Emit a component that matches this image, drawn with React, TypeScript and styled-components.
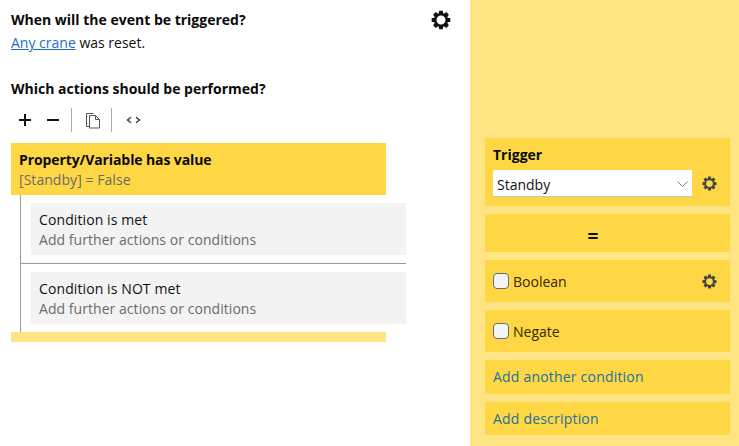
import React from 'react';
import styled, {createGlobalStyle} from 'styled-components';

const GlobalStyle = createGlobalStyle`
  html, body {
    margin: 0;
    padding: 0;
    background: #fff;
  }

  body {
    font-family: "Open Sans", "Noto Sans", "Liberation Sans", sans-serif;
    font-size: 14px;
    color: #111;
  }
`

const Gear = ({size, color}: { size: number, color: string }) => (
    <svg width={size} height={size} viewBox="0 0 24 24">
        <circle cx="12" cy="12" r="6.8" fill="none" stroke={color} strokeWidth="2.8"/>
        {[0, 45, 90, 135, 180, 225, 270, 315].map(angle => (
            <path key={angle} d="M9.8 0.8h4.4l0.8 4.4h-6z" fill={color} transform={`rotate(${angle} 12 12)`}/>
        ))}
    </svg>
);

const CopyIcon = () => (
    <svg width="16" height="17" viewBox="0 0 16 17" fill="none" stroke="#555" strokeWidth="1">
        <path d="M4.5 14.5H1.5V1.5H8.5"/>
        <path d="M4.5 3.5H10.5L14.5 7.5V16H4.5Z" fill="#fff"/>
        <path d="M10.5 3.5V7.5H14.5"/>
    </svg>
);

const PlusIcon = () => (
    <svg width="14" height="14" viewBox="0 0 14 14">
        <path d="M7 1v12M1 7h12" stroke="#111" strokeWidth="2"/>
    </svg>
);

const MinusIcon = () => (
    <svg width="14" height="14" viewBox="0 0 14 14">
        <path d="M1 7h12" stroke="#111" strokeWidth="2"/>
    </svg>
);

const CodeIcon = () => (
    <svg width="15" height="8" viewBox="0 0 15 8" fill="none" stroke="#222" strokeWidth="1.1">
        <path d="M5 1.2L1.4 4L5 6.8M10 1.2L13.6 4L10 6.8"/>
    </svg>
);

const Chevron = () => (
    <svg width="11" height="6" viewBox="0 0 11 6" fill="none" stroke="#666" strokeWidth="0.9">
        <path d="M0.5 0.5L5.5 5.5L10.5 0.5"/>
    </svg>
);

export default function App() {
    return (
        <>
            <GlobalStyle/>
            <Page>
                <Main>
                    <TitleRow>
                        <Heading>When will the event be triggered?</Heading>
                        <GearButton><Gear size={20} color="#111"/></GearButton>
                    </TitleRow>
                    <Sentence><a href="#crane">Any crane</a> was reset.</Sentence>

                    <SecondHeading>Which actions should be performed?</SecondHeading>

                    <Toolbar>
                        <ToolButton><PlusIcon/></ToolButton>
                        <ToolButton><MinusIcon/></ToolButton>
                        <ToolDivider/>
                        <ToolButton><CopyIcon/></ToolButton>
                        <ToolDivider/>
                        <ToolButton><CodeIcon/></ToolButton>
                    </Toolbar>

                    <Block>
                        <BlockTitle>Property/Variable has value</BlockTitle>
                        <Muted>[Standby] = False</Muted>
                    </Block>
                    <Branches>
                        <Branch>
                            <BranchTitle>Condition is met</BranchTitle>
                            <Muted>Add further actions or conditions</Muted>
                        </Branch>
                        <BranchLine/>
                        <Branch>
                            <BranchTitle>Condition is NOT met</BranchTitle>
                            <Muted>Add further actions or conditions</Muted>
                        </Branch>
                    </Branches>
                    <BlockEnd/>
                </Main>

                <Side>
                    <Card>
                        <CardLabel>Trigger</CardLabel>
                        <SelectRow>
                            <Select>
                                <span>Standby</span>
                                <Chevron/>
                            </Select>
                            <Gear size={15} color="#444"/>
                        </SelectRow>
                    </Card>
                    <OperatorCard>=</OperatorCard>
                    <CheckCard>
                        <CheckBox/>
                        <CheckLabel>Boolean</CheckLabel>
                        <Gear size={15} color="#444"/>
                    </CheckCard>
                    <CheckCard>
                        <CheckBox/>
                        <CheckLabel>Negate</CheckLabel>
                    </CheckCard>
                    <LinkCard>Add another condition</LinkCard>
                    <LinkCard>Add description</LinkCard>
                </Side>
            </Page>
        </>
    );
}

const Page = styled.div`
  display: flex;
  width: 739px;
  height: 446px;
  overflow: hidden;
`

const Main = styled.main`
  width: 470px;
  flex-shrink: 0;
  box-sizing: border-box;
  padding: 10px 0 0 11px;
`

const TitleRow = styled.div`
  display: flex;
  justify-content: space-between;
  align-items: center;
  width: 440px;
  height: 20px;
`

const Heading = styled.h2`
  margin: 0;
  font-size: 14px;
  line-height: 20px;
  font-weight: 700;
  color: #0a0a0a;
`

const SecondHeading = styled(Heading)`
  margin-top: 26px;
`

const GearButton = styled.span`
  display: flex;
`

const Sentence = styled.div`
  margin-top: 3px;
  line-height: 20px;

  a {
    color: #1a6fc4;
  }
`

const Toolbar = styled.div`
  display: flex;
  align-items: center;
  height: 24px;
  margin-top: 9px;
`

const ToolButton = styled.span`
  display: flex;
  justify-content: center;
  align-items: center;
  width: 28px;
  height: 24px;
`

const ToolDivider = styled.span`
  width: 1px;
  height: 24px;
  background: #aaa;
  margin: 0 7px 0 4px;
`

const Block = styled.div`
  width: 375px;
  height: 52px;
  box-sizing: border-box;
  margin-top: 11px;
  padding: 7px 8px;
  background: #ffd744;
  line-height: 20px;
`

const BlockTitle = styled.div`
  font-weight: 700;
  letter-spacing: -0.1px;
  color: #0a0a0a;
`

const Muted = styled.div`
  color: #6b6b6b;
  letter-spacing: 0.05px;
`

const Branches = styled.div`
  margin-left: 9px;
  width: 386px;
  padding: 8px 0;
  box-sizing: border-box;
  border-left: 1px solid #999;
`

const Branch = styled.div`
  margin-left: 10px;
  height: 52px;
  box-sizing: border-box;
  padding: 7px 8px;
  background: #f3f3f3;
  line-height: 20px;
`

const BranchTitle = styled.div`
  color: #111;
  letter-spacing: 0.1px;
`

const BranchLine = styled.div`
  height: 1px;
  margin: 8px 0;
  background: #999;
`

const BlockEnd = styled.div`
  width: 375px;
  height: 10px;
  background: #ffe484;
`

const Side = styled.aside`
  flex: 1;
  display: flex;
  flex-direction: column;
  justify-content: flex-end;
  gap: 8px;
  box-sizing: border-box;
  padding: 0 9px 11px 15px;
  background: #ffe484;
`

const Card = styled.div`
  height: 68px;
  box-sizing: border-box;
  padding: 7px 8px;
  background: #ffd744;
`

const CardLabel = styled.div`
  font-weight: 700;
  line-height: 20px;
  color: #0a0a0a;
`

const SelectRow = styled.div`
  display: flex;
  align-items: center;
  justify-content: space-between;
  padding-right: 5px;
  margin-top: 5px;
`

const Select = styled.div`
  width: 199px;
  height: 27px;
  box-sizing: border-box;
  display: flex;
  align-items: center;
  justify-content: space-between;
  padding: 2px 4px 0;
  background: #fff;
  border-bottom: 1px solid #c4c4c4;
`

const OperatorCard = styled.div`
  height: 38px;
  box-sizing: border-box;
  display: flex;
  align-items: center;
  justify-content: center;
  padding: 6px 29px 0 0;
  background: #ffd744;
  font-weight: 700;
  font-size: 19px;
  color: #0a0a0a;
`

const CheckCard = styled.label`
  height: 42px;
  box-sizing: border-box;
  display: flex;
  align-items: center;
  padding: 0 13px 0 8px;
  background: #ffd744;
`

const CheckBox = styled.span`
  width: 16px;
  height: 16px;
  box-sizing: border-box;
  border: 1px solid #6b6b6b;
  border-radius: 4px;
  background: #f3f4f6;
`

const CheckLabel = styled.span`
  flex: 1;
  margin-left: 4px;
  color: #332a00;
`

const LinkCard = styled.div`
  height: 33.5px;
  box-sizing: border-box;
  display: flex;
  align-items: center;
  padding: 0 8px;
  background: #ffd744;
  color: #22709f;
  letter-spacing: 0.2px;
`
